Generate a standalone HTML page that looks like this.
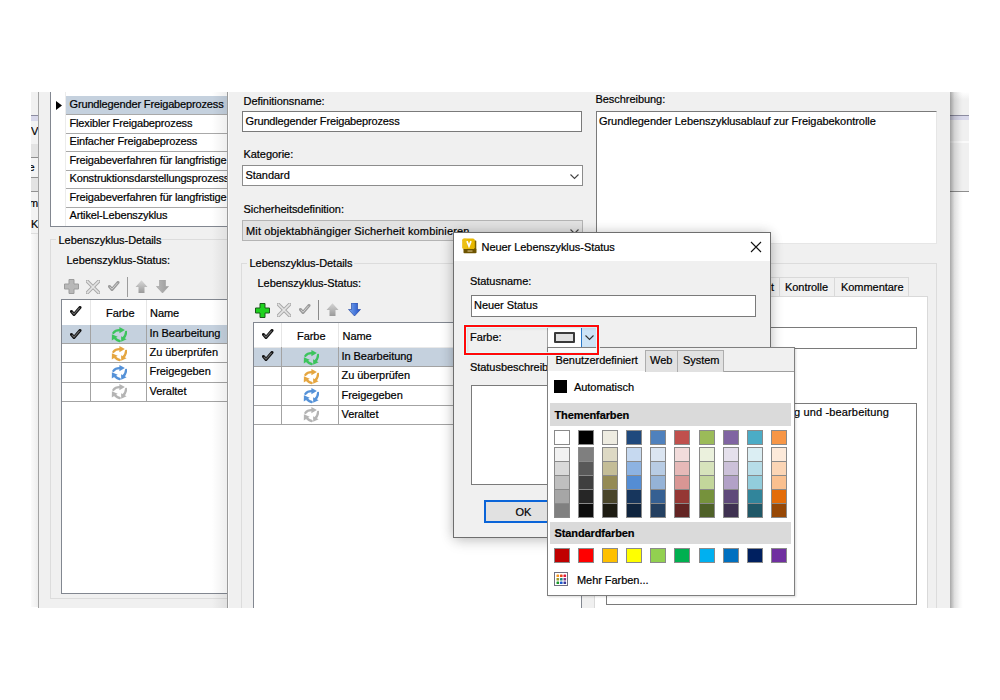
<!DOCTYPE html>
<html><head><meta charset="utf-8"><style>
html,body{margin:0;padding:0;}
body{width:1000px;height:700px;position:relative;overflow:hidden;background:#fff;}
.b{position:absolute;}
.t{position:absolute;font-family:"Liberation Sans",sans-serif;font-size:11px;line-height:13px;letter-spacing:-0.05px;white-space:nowrap;color:#000;-webkit-text-stroke:0.2px #000;}
</style></head><body>
<div class="b" style="left:31px;top:92px;width:7px;height:515px;background:linear-gradient(to right,#fbfbfb,#eeeeee);"></div>
<div class="b" style="left:31px;top:92px;width:7px;height:23px;background:#f1f1f1;"></div>
<div class="b" style="left:31px;top:115px;width:7px;height:1px;background:#8c8ca0;"></div>
<div class="b" style="left:31px;top:116px;width:7px;height:5px;background:#d8d8ea;"></div>
<div class="b" style="left:31px;top:121px;width:7px;height:23px;background:#f3f3f3;"></div>
<div class="b" style="left:31px;top:144px;width:7px;height:13px;background:#e3e3e3;"></div>
<div class="b" style="left:31px;top:157px;width:7px;height:1px;background:#8e8e8e;"></div>
<div class="b" style="left:31px;top:158px;width:7px;height:19px;background:#f3f3f3;"></div>
<div class="b" style="left:31px;top:177px;width:7px;height:1px;background:#929292;"></div>
<div class="b" style="left:31px;top:178px;width:7px;height:13px;background:#e3e3e3;"></div>
<div class="b" style="left:31px;top:191px;width:7px;height:1px;background:#929292;"></div>
<div class="b" style="left:31px;top:192px;width:7px;height:41px;background:#f3f3f3;"></div>
<div class="b" style="left:31px;top:233px;width:7px;height:1px;background:#dddddd;"></div>
<div class="b" style="left:31px;top:92px;width:7px;height:145px;overflow:hidden"><div class="t" style="left:0px;top:33px">V</div><div class="t" style="left:-2.5px;top:68.5px">e</div><div class="t" style="left:-2px;top:105px">m</div><div class="t" style="left:0px;top:126px">K</div></div>
<div class="b" style="left:38px;top:92px;width:190px;height:516px;background:#f0f0f0;"></div>
<div class="b" style="left:38px;top:92px;width:1px;height:516px;background:#a4a4a4;"></div>
<div class="b" style="left:50px;top:92px;width:178px;height:135px;background:#ffffff;"></div>
<div class="b" style="left:50px;top:92px;width:1px;height:135px;background:#828790;"></div>
<div class="b" style="left:50px;top:226px;width:178px;height:1px;background:#828790;"></div>
<div class="b" style="left:65px;top:92px;width:1px;height:134px;background:#ececec;"></div>
<div class="b" style="left:66px;top:96px;width:162px;height:18px;background:#c5d1de;"></div>
<div class="b" style="left:66px;top:114px;width:162px;height:1px;background:#a9a9a9;"></div>
<div class="b" style="left:66px;top:133px;width:162px;height:1px;background:#a9a9a9;"></div>
<div class="b" style="left:66px;top:151px;width:162px;height:1px;background:#a9a9a9;"></div>
<div class="b" style="left:66px;top:170px;width:162px;height:1px;background:#a9a9a9;"></div>
<div class="b" style="left:66px;top:188px;width:162px;height:1px;background:#a9a9a9;"></div>
<div class="b" style="left:66px;top:207px;width:162px;height:1px;background:#a9a9a9;"></div>
<svg class="b" style="left:55px;top:100px;" width="8" height="11" viewBox="0 0 8 11"><path d="M1 1 L7 5.5 L1 10 Z" fill="#000"/></svg>
<div class="t" style="left:69.5px;top:98.0px;letter-spacing:-0.15px">Grundlegender Freigabeprozess</div>
<div class="t" style="left:69.5px;top:116.5px;letter-spacing:-0.15px">Flexibler Freigabeprozess</div>
<div class="t" style="left:69.5px;top:135.0px;letter-spacing:-0.15px">Einfacher Freigabeprozess</div>
<div class="t" style="left:69.5px;top:153.5px;letter-spacing:-0.15px">Freigabeverfahren für langfristige Gültigkeit</div>
<div class="t" style="left:69.5px;top:172.0px;letter-spacing:-0.15px">Konstruktionsdarstellungsprozess</div>
<div class="t" style="left:69.5px;top:190.5px;letter-spacing:-0.15px">Freigabeverfahren für langfristige Gültigkeit</div>
<div class="t" style="left:69.5px;top:209.0px;letter-spacing:-0.15px">Artikel-Lebenszyklus</div>
<div class="b" style="left:50px;top:239px;width:178px;height:1px;background:#dcdcdc;"></div>
<div class="b" style="left:50px;top:239px;width:1px;height:360px;background:#dcdcdc;"></div>
<div class="b" style="left:50px;top:598px;width:178px;height:1px;background:#dcdcdc;"></div>
<div class="b" style="left:56px;top:234px;width:106px;height:12px;background:#f0f0f0;"></div>
<div class="t" style="left:58.5px;top:233.5px;">Lebenszyklus-Details</div>
<div class="t" style="left:66.5px;top:253.5px;">Lebenszyklus-Status:</div>
<svg class="b" style="left:63.5px;top:279px;" width="15" height="15" viewBox="0 0 15 15"><path d="M5 0.5 H10 V5 H14.5 V10 H10 V14.5 H5 V10 H0.5 V5 H5 Z" fill="#b8b8b8" stroke="#9c9c9c" stroke-width="1"/></svg>
<svg class="b" style="left:85.5px;top:279.5px;" width="14" height="14" viewBox="0 0 14 14"><path d="M1.5 1.5 L12.5 12.5 M12.5 1.5 L1.5 12.5" stroke="#a8a8a8" stroke-width="3.6" stroke-linecap="square"/><path d="M1.5 1.5 L12.5 12.5 M12.5 1.5 L1.5 12.5" stroke="#e4e4e4" stroke-width="1.6" stroke-linecap="square"/></svg>
<svg class="b" style="left:107.5px;top:280.5px;" width="12" height="11" viewBox="0 0 12 11"><path d="M1.5 5.5 L4 8.5 L10 1.5" fill="none" stroke="#9a9a9a" stroke-width="3" stroke-linejoin="round" stroke-linecap="round"/><path d="M1.8 5.8 L4 8.2 L9.6 1.9" fill="none" stroke="#d0d0d0" stroke-width="1" stroke-linejoin="round"/></svg>
<div class="b" style="left:127px;top:277px;width:1px;height:20px;background:#9c9c9c;"></div>
<svg class="b" style="left:134.5px;top:280px;" width="13" height="13" viewBox="0 0 13 13"><defs><linearGradient id="ug134_5" x1="0" y1="0" x2="0" y2="1"><stop offset="0" stop-color="#d8d8d8"/><stop offset="1" stop-color="#9a9a9a"/></linearGradient></defs><path d="M6.5 0.3 L12.5 7 L9.5 7 L9.5 13 L3.5 13 L3.5 7 L0.5 7 Z" fill="url(#ug134_5)"/></svg>
<svg class="b" style="left:155.5px;top:280px;" width="13" height="13" viewBox="0 0 13 13"><defs><linearGradient id="dg155_5" x1="0" y1="0" x2="1" y2="0"><stop offset="0" stop-color="#b8b8b8"/><stop offset="1" stop-color="#9c9c9c"/></linearGradient></defs><path d="M3.5 0 L9.5 0 L9.5 6.5 L12.5 6.5 L6.5 13 L0.5 6.5 L3.5 6.5 Z" fill="url(#dg155_5)" stroke="#a0a0a0" stroke-width="0.6"/></svg>
<div class="b" style="left:61px;top:299px;width:167px;height:295px;background:#ffffff;"></div>
<div class="b" style="left:61px;top:299px;width:167px;height:1px;background:#828790;"></div>
<div class="b" style="left:61px;top:299px;width:1px;height:295px;background:#828790;"></div>
<div class="b" style="left:61px;top:593px;width:167px;height:1px;background:#828790;"></div>
<div class="b" style="left:90px;top:300px;width:1px;height:25px;background:#e6e6e6;"></div>
<div class="b" style="left:146px;top:300px;width:1px;height:25px;background:#e6e6e6;"></div>
<svg class="b" style="left:69.5px;top:306px;" width="12" height="11" viewBox="0 0 12 11"><path d="M1.5 5.5 L4 8.5 L10 1.5" fill="none" stroke="#111" stroke-width="3" stroke-linejoin="round" stroke-linecap="round"/><path d="M1.8 5.8 L4 8.2 L9.6 1.9" fill="none" stroke="#6a6a6a" stroke-width="1.1" stroke-linejoin="round"/></svg>
<div class="t" style="left:106px;top:306.5px;">Farbe</div>
<div class="t" style="left:150px;top:306.5px;">Name</div>
<div class="b" style="left:62px;top:325px;width:166px;height:18px;background:#c5d1de;"></div>
<div class="b" style="left:62px;top:343px;width:166px;height:1px;background:#a3a3a3;"></div>
<div class="b" style="left:62px;top:362px;width:166px;height:1px;background:#a3a3a3;"></div>
<div class="b" style="left:62px;top:382px;width:166px;height:1px;background:#a3a3a3;"></div>
<div class="b" style="left:62px;top:401px;width:166px;height:1px;background:#a3a3a3;"></div>
<div class="b" style="left:90px;top:325px;width:1px;height:76px;background:#a3a3a3;"></div>
<div class="b" style="left:146px;top:325px;width:1px;height:76px;background:#a3a3a3;"></div>
<svg class="b" style="left:70px;top:329px;" width="12" height="11" viewBox="0 0 12 11"><path d="M1.5 5.5 L4 8.5 L10 1.5" fill="none" stroke="#111" stroke-width="3" stroke-linejoin="round" stroke-linecap="round"/><path d="M1.8 5.8 L4 8.2 L9.6 1.9" fill="none" stroke="#6a6a6a" stroke-width="1.1" stroke-linejoin="round"/></svg>
<svg class="b" style="left:111px;top:326.5px;" width="16" height="16" viewBox="0 0 16 16"><g fill="none" stroke="#3cc45c" stroke-width="2.4" stroke-linecap="round"><path d="M2.4 5.9 Q4.6 2.9 9 3.1"/><path d="M15.1 5 Q14.8 8.6 12.6 10.9"/><path d="M8.6 14 Q6.2 13.6 4.3 11.6"/></g><g fill="#3cc45c"><path d="M8.4 0 L13.9 3 L8.4 6.3 Z"/><path d="M10.1 9.3 L15.6 12.3 L10.2 14.7 Z"/><path d="M0.9 7.3 L0.8 13.6 L6.7 9.8 Z"/></g></svg>
<div class="t" style="left:149.5px;top:327.0px;">In Bearbeitung</div>
<svg class="b" style="left:111px;top:345.7px;" width="16" height="16" viewBox="0 0 16 16"><g fill="none" stroke="#e5a640" stroke-width="2.4" stroke-linecap="round"><path d="M2.4 5.9 Q4.6 2.9 9 3.1"/><path d="M15.1 5 Q14.8 8.6 12.6 10.9"/><path d="M8.6 14 Q6.2 13.6 4.3 11.6"/></g><g fill="#e5a640"><path d="M8.4 0 L13.9 3 L8.4 6.3 Z"/><path d="M10.1 9.3 L15.6 12.3 L10.2 14.7 Z"/><path d="M0.9 7.3 L0.8 13.6 L6.7 9.8 Z"/></g></svg>
<div class="t" style="left:149.5px;top:346.2px;">Zu überprüfen</div>
<svg class="b" style="left:111px;top:364.9px;" width="16" height="16" viewBox="0 0 16 16"><g fill="none" stroke="#5592d8" stroke-width="2.4" stroke-linecap="round"><path d="M2.4 5.9 Q4.6 2.9 9 3.1"/><path d="M15.1 5 Q14.8 8.6 12.6 10.9"/><path d="M8.6 14 Q6.2 13.6 4.3 11.6"/></g><g fill="#5592d8"><path d="M8.4 0 L13.9 3 L8.4 6.3 Z"/><path d="M10.1 9.3 L15.6 12.3 L10.2 14.7 Z"/><path d="M0.9 7.3 L0.8 13.6 L6.7 9.8 Z"/></g></svg>
<div class="t" style="left:149.5px;top:365.4px;">Freigegeben</div>
<svg class="b" style="left:111px;top:384.1px;" width="16" height="16" viewBox="0 0 16 16"><g fill="none" stroke="#b4b4b4" stroke-width="2.4" stroke-linecap="round"><path d="M2.4 5.9 Q4.6 2.9 9 3.1"/><path d="M15.1 5 Q14.8 8.6 12.6 10.9"/><path d="M8.6 14 Q6.2 13.6 4.3 11.6"/></g><g fill="#b4b4b4"><path d="M8.4 0 L13.9 3 L8.4 6.3 Z"/><path d="M10.1 9.3 L15.6 12.3 L10.2 14.7 Z"/><path d="M0.9 7.3 L0.8 13.6 L6.7 9.8 Z"/></g></svg>
<div class="t" style="left:149.5px;top:384.6px;">Veraltet</div>
<div class="b" style="left:212px;top:92px;width:16px;height:516px;background:linear-gradient(to right,rgba(0,0,0,0),rgba(0,0,0,0.07));"></div>
<div class="b" style="left:950px;top:92px;width:19px;height:100px;background:#f0f0f0;"></div>
<div class="b" style="left:950px;top:92px;width:19px;height:8px;background:linear-gradient(to bottom,#ffffff,#f0f0f0);"></div>
<div class="b" style="left:950px;top:115px;width:19px;height:1px;background:#8c8ca0;"></div>
<div class="b" style="left:950px;top:116px;width:19px;height:4px;background:#d8d8ea;"></div>
<div class="b" style="left:950px;top:141px;width:19px;height:2px;background:#fafafa;"></div>
<div class="b" style="left:950px;top:191px;width:19px;height:1px;background:#8e8e8e;"></div>
<div class="b" style="left:228px;top:92px;width:722px;height:516px;background:#f0f0f0;"></div>
<div class="b" style="left:227px;top:92px;width:1px;height:516px;background:#9a9a9a;"></div>
<div class="b" style="left:228px;top:92px;width:1px;height:516px;background:#fafafa;"></div>
<div class="t" style="left:243.5px;top:95px;">Definitionsname:</div>
<div class="b" style="left:242px;top:111px;width:340px;height:21px;background:#fff;border:1px solid #7a7a7a;box-sizing:border-box"></div>
<div class="t" style="left:245.5px;top:115px;letter-spacing:-0.15px">Grundlegender Freigabeprozess</div>
<div class="t" style="left:243.5px;top:148px;">Kategorie:</div>
<div class="b" style="left:242px;top:165px;width:341px;height:21px;background:#fff;border:1px solid #8c8c8c;box-sizing:border-box"></div>
<div class="t" style="left:245.5px;top:169px;">Standard</div>
<svg class="b" style="left:569.5px;top:173.5px;" width="9" height="6" viewBox="0 0 9 6"><path d="M0.5 0.5 L4.5 4.5 L8.5 0.5" fill="none" stroke="#444" stroke-width="1.1"/></svg>
<div class="t" style="left:243.5px;top:203px;">Sicherheitsdefinition:</div>
<div class="b" style="left:242px;top:220px;width:341px;height:21px;background:#e2e2e2;border:1px solid #b4b4b4;box-sizing:border-box"></div>
<div class="t" style="left:246px;top:224.5px;letter-spacing:0.15px">Mit objektabhängiger Sicherheit kombinieren</div>
<svg class="b" style="left:569.5px;top:228.5px;" width="9" height="6" viewBox="0 0 9 6"><path d="M0.5 0.5 L4.5 4.5 L8.5 0.5" fill="none" stroke="#444" stroke-width="1.1"/></svg>
<div class="t" style="left:595.5px;top:93px;">Beschreibung:</div>
<div class="b" style="left:596px;top:111px;width:341px;height:133px;background:#fff;border-style:solid;border-width:1px;border-color:#7a7a7a #e6e6e6 #e6e6e6 #7a7a7a;box-sizing:border-box"></div>
<div class="t" style="left:599px;top:115px;">Grundlegender Lebenszyklusablauf zur Freigabekontrolle</div>
<div class="b" style="left:241px;top:263px;width:348px;height:1px;background:#dcdcdc;"></div>
<div class="b" style="left:241px;top:263px;width:1px;height:345px;background:#dcdcdc;"></div>
<div class="b" style="left:247px;top:258px;width:107px;height:12px;background:#f0f0f0;"></div>
<div class="t" style="left:249.5px;top:257px;">Lebenszyklus-Details</div>
<div class="t" style="left:257.5px;top:277px;">Lebenszyklus-Status:</div>
<svg class="b" style="left:255px;top:302.5px;" width="15" height="15" viewBox="0 0 15 15"><path d="M5 0.5 H10 V5 H14.5 V10 H10 V14.5 H5 V10 H0.5 V5 H5 Z" fill="#1ed21e" stroke="#1a5a1a" stroke-width="1"/></svg>
<svg class="b" style="left:277px;top:302.5px;" width="14" height="14" viewBox="0 0 14 14"><path d="M1.5 1.5 L12.5 12.5 M12.5 1.5 L1.5 12.5" stroke="#a8a8a8" stroke-width="3.6" stroke-linecap="square"/><path d="M1.5 1.5 L12.5 12.5 M12.5 1.5 L1.5 12.5" stroke="#e4e4e4" stroke-width="1.6" stroke-linecap="square"/></svg>
<svg class="b" style="left:299px;top:303.5px;" width="12" height="11" viewBox="0 0 12 11"><path d="M1.5 5.5 L4 8.5 L10 1.5" fill="none" stroke="#9a9a9a" stroke-width="3" stroke-linejoin="round" stroke-linecap="round"/><path d="M1.8 5.8 L4 8.2 L9.6 1.9" fill="none" stroke="#d0d0d0" stroke-width="1" stroke-linejoin="round"/></svg>
<div class="b" style="left:318px;top:300px;width:1px;height:20px;background:#8a8a8a;"></div>
<svg class="b" style="left:326px;top:303px;" width="13" height="13" viewBox="0 0 13 13"><defs><linearGradient id="ug326" x1="0" y1="0" x2="0" y2="1"><stop offset="0" stop-color="#d4d4d4"/><stop offset="1" stop-color="#9a9a9a"/></linearGradient></defs><path d="M6.5 0.3 L12.5 7 L9.5 7 L9.5 13 L3.5 13 L3.5 7 L0.5 7 Z" fill="url(#ug326)"/></svg>
<svg class="b" style="left:347.5px;top:303px;" width="13" height="13" viewBox="0 0 13 13"><defs><linearGradient id="dg347_5" x1="0" y1="0" x2="1" y2="0"><stop offset="0" stop-color="#7aaaf0"/><stop offset="1" stop-color="#1f4fc8"/></linearGradient></defs><path d="M3.5 0 L9.5 0 L9.5 6.5 L12.5 6.5 L6.5 13 L0.5 6.5 L3.5 6.5 Z" fill="url(#dg347_5)" stroke="#1a3a9a" stroke-width="0.6"/></svg>
<div class="b" style="left:253px;top:322px;width:329px;height:286px;background:#fff;"></div>
<div class="b" style="left:253px;top:322px;width:329px;height:1px;background:#828790;"></div>
<div class="b" style="left:253px;top:322px;width:1px;height:286px;background:#828790;"></div>
<div class="b" style="left:581px;top:322px;width:1px;height:286px;background:#828790;"></div>
<div class="b" style="left:281px;top:323px;width:1px;height:24px;background:#e6e6e6;"></div>
<div class="b" style="left:338px;top:323px;width:1px;height:24px;background:#e6e6e6;"></div>
<svg class="b" style="left:261.5px;top:328.5px;" width="12" height="11" viewBox="0 0 12 11"><path d="M1.5 5.5 L4 8.5 L10 1.5" fill="none" stroke="#111" stroke-width="3" stroke-linejoin="round" stroke-linecap="round"/><path d="M1.8 5.8 L4 8.2 L9.6 1.9" fill="none" stroke="#6a6a6a" stroke-width="1.1" stroke-linejoin="round"/></svg>
<div class="t" style="left:297px;top:330px;">Farbe</div>
<div class="t" style="left:342.5px;top:330px;">Name</div>
<div class="b" style="left:254px;top:348px;width:327px;height:18px;background:#c5d1de;"></div>
<div class="b" style="left:254px;top:347px;width:327px;height:1px;background:#e9e9e9;"></div>
<div class="b" style="left:254px;top:366px;width:327px;height:1px;background:#a3a3a3;"></div>
<div class="b" style="left:254px;top:385px;width:327px;height:1px;background:#a3a3a3;"></div>
<div class="b" style="left:254px;top:405px;width:327px;height:1px;background:#a3a3a3;"></div>
<div class="b" style="left:254px;top:424px;width:327px;height:1px;background:#a3a3a3;"></div>
<div class="b" style="left:281px;top:347px;width:1px;height:77px;background:#a3a3a3;"></div>
<div class="b" style="left:338px;top:347px;width:1px;height:77px;background:#a3a3a3;"></div>
<svg class="b" style="left:262px;top:350.5px;" width="12" height="11" viewBox="0 0 12 11"><path d="M1.5 5.5 L4 8.5 L10 1.5" fill="none" stroke="#111" stroke-width="3" stroke-linejoin="round" stroke-linecap="round"/><path d="M1.8 5.8 L4 8.2 L9.6 1.9" fill="none" stroke="#6a6a6a" stroke-width="1.1" stroke-linejoin="round"/></svg>
<svg class="b" style="left:303px;top:349.5px;" width="16" height="16" viewBox="0 0 16 16"><g fill="none" stroke="#3cc45c" stroke-width="2.4" stroke-linecap="round"><path d="M2.4 5.9 Q4.6 2.9 9 3.1"/><path d="M15.1 5 Q14.8 8.6 12.6 10.9"/><path d="M8.6 14 Q6.2 13.6 4.3 11.6"/></g><g fill="#3cc45c"><path d="M8.4 0 L13.9 3 L8.4 6.3 Z"/><path d="M10.1 9.3 L15.6 12.3 L10.2 14.7 Z"/><path d="M0.9 7.3 L0.8 13.6 L6.7 9.8 Z"/></g></svg>
<div class="t" style="left:341.5px;top:350.0px;">In Bearbeitung</div>
<svg class="b" style="left:303px;top:368.7px;" width="16" height="16" viewBox="0 0 16 16"><g fill="none" stroke="#e5a640" stroke-width="2.4" stroke-linecap="round"><path d="M2.4 5.9 Q4.6 2.9 9 3.1"/><path d="M15.1 5 Q14.8 8.6 12.6 10.9"/><path d="M8.6 14 Q6.2 13.6 4.3 11.6"/></g><g fill="#e5a640"><path d="M8.4 0 L13.9 3 L8.4 6.3 Z"/><path d="M10.1 9.3 L15.6 12.3 L10.2 14.7 Z"/><path d="M0.9 7.3 L0.8 13.6 L6.7 9.8 Z"/></g></svg>
<div class="t" style="left:341.5px;top:369.3px;">Zu überprüfen</div>
<svg class="b" style="left:303px;top:387.9px;" width="16" height="16" viewBox="0 0 16 16"><g fill="none" stroke="#5592d8" stroke-width="2.4" stroke-linecap="round"><path d="M2.4 5.9 Q4.6 2.9 9 3.1"/><path d="M15.1 5 Q14.8 8.6 12.6 10.9"/><path d="M8.6 14 Q6.2 13.6 4.3 11.6"/></g><g fill="#5592d8"><path d="M8.4 0 L13.9 3 L8.4 6.3 Z"/><path d="M10.1 9.3 L15.6 12.3 L10.2 14.7 Z"/><path d="M0.9 7.3 L0.8 13.6 L6.7 9.8 Z"/></g></svg>
<div class="t" style="left:341.5px;top:388.6px;">Freigegeben</div>
<svg class="b" style="left:303px;top:407.1px;" width="16" height="16" viewBox="0 0 16 16"><g fill="none" stroke="#b4b4b4" stroke-width="2.4" stroke-linecap="round"><path d="M2.4 5.9 Q4.6 2.9 9 3.1"/><path d="M15.1 5 Q14.8 8.6 12.6 10.9"/><path d="M8.6 14 Q6.2 13.6 4.3 11.6"/></g><g fill="#b4b4b4"><path d="M8.4 0 L13.9 3 L8.4 6.3 Z"/><path d="M10.1 9.3 L15.6 12.3 L10.2 14.7 Z"/><path d="M0.9 7.3 L0.8 13.6 L6.7 9.8 Z"/></g></svg>
<div class="t" style="left:341.5px;top:407.9px;">Veraltet</div>
<div class="b" style="left:594px;top:263px;width:343px;height:1px;background:#dcdcdc;"></div>
<div class="b" style="left:936px;top:263px;width:1px;height:345px;background:#dcdcdc;"></div>
<div class="b" style="left:594px;top:277px;width:186px;height:20px;background:#f0f0f0;border:1px solid #d9d9d9;box-sizing:border-box"></div>
<div class="b" style="left:779px;top:277px;width:56px;height:20px;background:#f0f0f0;border:1px solid #d9d9d9;box-sizing:border-box"></div>
<div class="b" style="left:834px;top:277px;width:75px;height:20px;background:#f0f0f0;border:1px solid #d9d9d9;box-sizing:border-box"></div>
<div class="b" style="left:595px;top:279px;width:183px;height:17px;overflow:hidden"><div class="t" style="right:4px;top:2px">Sicherheit</div></div>
<div class="t" style="left:785px;top:281px;">Kontrolle</div>
<div class="t" style="left:841px;top:281px;">Kommentare</div>
<div class="b" style="left:594px;top:296px;width:334px;height:312px;background:#fff;border:1px solid #d9d9d9;border-bottom:none;box-sizing:border-box"></div>
<div class="b" style="left:600px;top:327px;width:317px;height:22px;background:#fff;border:1px solid #7a7a7a;box-sizing:border-box"></div>
<div class="b" style="left:606px;top:403px;width:311px;height:202px;background:#fff;border:1px solid #7a7a7a;box-sizing:border-box"></div>
<div class="t" style="right:111px;top:406px;letter-spacing:0.15px">Lebenszyklus für Konstruktionsdatenerstellung und -bearbeitung</div>
<div class="b" style="left:950px;top:92px;width:13px;height:516px;background:linear-gradient(to right,rgba(0,0,0,0.34),rgba(0,0,0,0.12) 35%,rgba(0,0,0,0.03) 75%,rgba(0,0,0,0));"></div>
<div class="b" style="left:454px;top:233px;width:316px;height:304px;box-shadow:0 0 12px rgba(0,0,0,0.2),0 4px 14px rgba(0,0,0,0.14)"></div>
<div class="b" style="left:453px;top:232px;width:318px;height:306px;background:#f0f0f0;border:1px solid #6e6e6e;box-sizing:border-box"></div>
<div class="b" style="left:454px;top:233px;width:316px;height:28px;background:#ffffff;"></div>
<svg class="b" style="left:462px;top:238px;" width="15" height="16" viewBox="0 0 15 16"><rect x="12" y="2.5" width="2.3" height="12.5" rx="0.6" fill="#7a6200"/><rect x="1.5" y="10.5" width="12.8" height="4.8" rx="0.8" fill="#6e5400"/><rect x="0.3" y="0.5" width="12.5" height="10.6" rx="1.8" fill="#e8b800"/><rect x="0.3" y="0.5" width="5" height="10.6" rx="1.5" fill="#f0c420" opacity="0.6"/><path d="M5 3.1 L7 8.2 L9 3.1" fill="none" stroke="#fff" stroke-width="1.7"/><rect x="5.5" y="12.4" width="5" height="1.3" fill="#c8b070"/></svg>
<div class="t" style="left:481.5px;top:240.5px;">Neuer Lebenszyklus-Status</div>
<svg class="b" style="left:750px;top:240.5px;" width="12" height="12" viewBox="0 0 12 12"><path d="M1 1 L11 11 M11 1 L1 11" stroke="#111" stroke-width="1.1"/></svg>
<div class="t" style="left:470px;top:275px;">Statusname:</div>
<div class="b" style="left:471px;top:295px;width:285px;height:22px;background:#fff;border:1px solid #7a7a7a;box-sizing:border-box"></div>
<div class="t" style="left:474px;top:299px;">Neuer Status</div>
<div class="t" style="left:470px;top:331px;">Farbe:</div>
<div class="b" style="left:547px;top:327px;width:51px;height:21px;background:#fff;border:1px solid #a0a0a0;border-bottom-color:#8a8a8a;box-sizing:border-box"></div>
<div class="b" style="left:554px;top:332px;width:21px;height:11px;background:#e0e0e0;border:2px solid #3a3a3a;box-sizing:border-box;border-radius:1px"></div>
<div class="b" style="left:581px;top:328px;width:16px;height:19px;background:#cde4f7;border-left:1px solid #2a78c8;box-sizing:border-box"></div>
<svg class="b" style="left:585px;top:335px;" width="9" height="6" viewBox="0 0 9 6"><path d="M0.5 0.5 L4.5 4.5 L8.5 0.5" fill="none" stroke="#333" stroke-width="1.1"/></svg>
<div class="t" style="left:470px;top:361px;">Statusbeschreibung:</div>
<div class="b" style="left:471px;top:385px;width:289px;height:100px;background:#fff;border:1px solid #7a7a7a;box-sizing:border-box"></div>
<div class="b" style="left:484px;top:500px;width:76px;height:23px;background:#e1e1e1;border:2px solid #0a64d8;box-sizing:border-box"></div>
<div class="t" style="left:515.5px;top:506px;">OK</div>
<div class="b" style="left:547px;top:347px;width:248px;height:249px;background:#fff;border:1px solid #7f7f7f;box-sizing:border-box;box-shadow:1px 1px 2px rgba(0,0,0,0.15)"></div>
<div class="b" style="left:548px;top:348px;width:246px;height:23px;background:#f0f0f0;"></div>
<div class="b" style="left:548px;top:348px;width:49px;height:4px;background:#fafafa;"></div>
<div class="b" style="left:645px;top:371px;width:149px;height:1px;background:#a0a0a0;"></div>
<div class="b" style="left:645px;top:350px;width:33px;height:22px;background:#e1e1e1;border:1px solid #adadad;border-bottom:none;box-sizing:border-box"></div>
<div class="b" style="left:677px;top:350px;width:47px;height:22px;background:#e1e1e1;border:1px solid #adadad;border-bottom:none;box-sizing:border-box"></div>
<div class="t" style="left:555.5px;top:354px;">Benutzerdefiniert</div>
<div class="t" style="left:650px;top:354px;">Web</div>
<div class="t" style="left:683px;top:354px;">System</div>
<div class="b" style="left:554px;top:380px;width:13px;height:13px;background:#000;"></div>
<div class="t" style="left:574px;top:380.5px;">Automatisch</div>
<div class="b" style="left:550px;top:403px;width:241px;height:23px;background:#dadada;"></div>
<div class="t" style="left:554.5px;top:409px;font-weight:bold;letter-spacing:-0.1px">Themenfarben</div>
<div class="b" style="left:554px;top:430px;width:16px;height:15px;background:#FFFFFF;border:1px solid #8a8a8a;box-sizing:border-box"></div>
<div class="b" style="left:554px;top:447px;width:16px;height:71px;background:#8a8a8a;"></div>
<div class="b" style="left:555px;top:448px;width:14px;height:13px;background:#F2F2F2;"></div>
<div class="b" style="left:555px;top:462px;width:14px;height:13px;background:#D9D9D9;"></div>
<div class="b" style="left:555px;top:476px;width:14px;height:13px;background:#BFBFBF;"></div>
<div class="b" style="left:555px;top:490px;width:14px;height:13px;background:#A6A6A6;"></div>
<div class="b" style="left:555px;top:504px;width:14px;height:13px;background:#808080;"></div>
<div class="b" style="left:578px;top:430px;width:16px;height:15px;background:#000000;border:1px solid #8a8a8a;box-sizing:border-box"></div>
<div class="b" style="left:578px;top:447px;width:16px;height:71px;background:#8a8a8a;"></div>
<div class="b" style="left:579px;top:448px;width:14px;height:13px;background:#7F7F7F;"></div>
<div class="b" style="left:579px;top:462px;width:14px;height:13px;background:#595959;"></div>
<div class="b" style="left:579px;top:476px;width:14px;height:13px;background:#3F3F3F;"></div>
<div class="b" style="left:579px;top:490px;width:14px;height:13px;background:#262626;"></div>
<div class="b" style="left:579px;top:504px;width:14px;height:13px;background:#0D0D0D;"></div>
<div class="b" style="left:602px;top:430px;width:16px;height:15px;background:#EEECE1;border:1px solid #8a8a8a;box-sizing:border-box"></div>
<div class="b" style="left:602px;top:447px;width:16px;height:71px;background:#8a8a8a;"></div>
<div class="b" style="left:603px;top:448px;width:14px;height:13px;background:#DDD9C4;"></div>
<div class="b" style="left:603px;top:462px;width:14px;height:13px;background:#C4BD97;"></div>
<div class="b" style="left:603px;top:476px;width:14px;height:13px;background:#948A54;"></div>
<div class="b" style="left:603px;top:490px;width:14px;height:13px;background:#4A452A;"></div>
<div class="b" style="left:603px;top:504px;width:14px;height:13px;background:#1D1B11;"></div>
<div class="b" style="left:626px;top:430px;width:16px;height:15px;background:#1F497D;border:1px solid #8a8a8a;box-sizing:border-box"></div>
<div class="b" style="left:626px;top:447px;width:16px;height:71px;background:#8a8a8a;"></div>
<div class="b" style="left:627px;top:448px;width:14px;height:13px;background:#C6D9F0;"></div>
<div class="b" style="left:627px;top:462px;width:14px;height:13px;background:#8DB3E2;"></div>
<div class="b" style="left:627px;top:476px;width:14px;height:13px;background:#548DD4;"></div>
<div class="b" style="left:627px;top:490px;width:14px;height:13px;background:#17365D;"></div>
<div class="b" style="left:627px;top:504px;width:14px;height:13px;background:#0F243E;"></div>
<div class="b" style="left:650px;top:430px;width:16px;height:15px;background:#4F81BD;border:1px solid #8a8a8a;box-sizing:border-box"></div>
<div class="b" style="left:650px;top:447px;width:16px;height:71px;background:#8a8a8a;"></div>
<div class="b" style="left:651px;top:448px;width:14px;height:13px;background:#DBE5F1;"></div>
<div class="b" style="left:651px;top:462px;width:14px;height:13px;background:#B8CCE4;"></div>
<div class="b" style="left:651px;top:476px;width:14px;height:13px;background:#95B3D7;"></div>
<div class="b" style="left:651px;top:490px;width:14px;height:13px;background:#366092;"></div>
<div class="b" style="left:651px;top:504px;width:14px;height:13px;background:#244061;"></div>
<div class="b" style="left:674px;top:430px;width:16px;height:15px;background:#C0504D;border:1px solid #8a8a8a;box-sizing:border-box"></div>
<div class="b" style="left:674px;top:447px;width:16px;height:71px;background:#8a8a8a;"></div>
<div class="b" style="left:675px;top:448px;width:14px;height:13px;background:#F2DCDB;"></div>
<div class="b" style="left:675px;top:462px;width:14px;height:13px;background:#E6B9B8;"></div>
<div class="b" style="left:675px;top:476px;width:14px;height:13px;background:#D99694;"></div>
<div class="b" style="left:675px;top:490px;width:14px;height:13px;background:#953734;"></div>
<div class="b" style="left:675px;top:504px;width:14px;height:13px;background:#632423;"></div>
<div class="b" style="left:699px;top:430px;width:16px;height:15px;background:#9BBB59;border:1px solid #8a8a8a;box-sizing:border-box"></div>
<div class="b" style="left:699px;top:447px;width:16px;height:71px;background:#8a8a8a;"></div>
<div class="b" style="left:700px;top:448px;width:14px;height:13px;background:#EBF1DD;"></div>
<div class="b" style="left:700px;top:462px;width:14px;height:13px;background:#D7E3BC;"></div>
<div class="b" style="left:700px;top:476px;width:14px;height:13px;background:#C3D69B;"></div>
<div class="b" style="left:700px;top:490px;width:14px;height:13px;background:#76923C;"></div>
<div class="b" style="left:700px;top:504px;width:14px;height:13px;background:#4F6128;"></div>
<div class="b" style="left:723px;top:430px;width:16px;height:15px;background:#8064A2;border:1px solid #8a8a8a;box-sizing:border-box"></div>
<div class="b" style="left:723px;top:447px;width:16px;height:71px;background:#8a8a8a;"></div>
<div class="b" style="left:724px;top:448px;width:14px;height:13px;background:#E5E0EC;"></div>
<div class="b" style="left:724px;top:462px;width:14px;height:13px;background:#CCC1D9;"></div>
<div class="b" style="left:724px;top:476px;width:14px;height:13px;background:#B2A1C7;"></div>
<div class="b" style="left:724px;top:490px;width:14px;height:13px;background:#5F497A;"></div>
<div class="b" style="left:724px;top:504px;width:14px;height:13px;background:#3F3151;"></div>
<div class="b" style="left:747px;top:430px;width:16px;height:15px;background:#4BACC6;border:1px solid #8a8a8a;box-sizing:border-box"></div>
<div class="b" style="left:747px;top:447px;width:16px;height:71px;background:#8a8a8a;"></div>
<div class="b" style="left:748px;top:448px;width:14px;height:13px;background:#DBEEF3;"></div>
<div class="b" style="left:748px;top:462px;width:14px;height:13px;background:#B7DDE8;"></div>
<div class="b" style="left:748px;top:476px;width:14px;height:13px;background:#92CDDC;"></div>
<div class="b" style="left:748px;top:490px;width:14px;height:13px;background:#31859B;"></div>
<div class="b" style="left:748px;top:504px;width:14px;height:13px;background:#205867;"></div>
<div class="b" style="left:771px;top:430px;width:16px;height:15px;background:#F79646;border:1px solid #8a8a8a;box-sizing:border-box"></div>
<div class="b" style="left:771px;top:447px;width:16px;height:71px;background:#8a8a8a;"></div>
<div class="b" style="left:772px;top:448px;width:14px;height:13px;background:#FDEADA;"></div>
<div class="b" style="left:772px;top:462px;width:14px;height:13px;background:#FBD5B5;"></div>
<div class="b" style="left:772px;top:476px;width:14px;height:13px;background:#FAC08F;"></div>
<div class="b" style="left:772px;top:490px;width:14px;height:13px;background:#E36C09;"></div>
<div class="b" style="left:772px;top:504px;width:14px;height:13px;background:#974806;"></div>
<div class="b" style="left:550px;top:522px;width:241px;height:22px;background:#dadada;"></div>
<div class="t" style="left:554.5px;top:527px;font-weight:bold;letter-spacing:-0.1px">Standardfarben</div>
<div class="b" style="left:554px;top:548px;width:16px;height:15px;background:#C00000;border:1px solid #8a8a8a;box-sizing:border-box"></div>
<div class="b" style="left:578px;top:548px;width:16px;height:15px;background:#FF0000;border:1px solid #8a8a8a;box-sizing:border-box"></div>
<div class="b" style="left:602px;top:548px;width:16px;height:15px;background:#FFC000;border:1px solid #8a8a8a;box-sizing:border-box"></div>
<div class="b" style="left:626px;top:548px;width:16px;height:15px;background:#FFFF00;border:1px solid #8a8a8a;box-sizing:border-box"></div>
<div class="b" style="left:650px;top:548px;width:16px;height:15px;background:#92D050;border:1px solid #8a8a8a;box-sizing:border-box"></div>
<div class="b" style="left:674px;top:548px;width:16px;height:15px;background:#00B050;border:1px solid #8a8a8a;box-sizing:border-box"></div>
<div class="b" style="left:699px;top:548px;width:16px;height:15px;background:#00B0F0;border:1px solid #8a8a8a;box-sizing:border-box"></div>
<div class="b" style="left:723px;top:548px;width:16px;height:15px;background:#0070C0;border:1px solid #8a8a8a;box-sizing:border-box"></div>
<div class="b" style="left:747px;top:548px;width:16px;height:15px;background:#002060;border:1px solid #8a8a8a;box-sizing:border-box"></div>
<div class="b" style="left:771px;top:548px;width:16px;height:15px;background:#7030A0;border:1px solid #8a8a8a;box-sizing:border-box"></div>
<svg class="b" style="left:554px;top:572px;" width="14" height="14" viewBox="0 0 14 14"><rect x="0.5" y="0.5" width="13" height="13" fill="#fff" stroke="#6f6f80"/><rect x="2.5" y="2.5" width="2.6" height="2.6" rx="0.6" fill="#f7941d"/><rect x="6.0" y="2.5" width="2.6" height="2.6" rx="0.6" fill="#e84a1d"/><rect x="9.5" y="2.5" width="2.6" height="2.6" rx="0.6" fill="#e0163a"/><rect x="2.5" y="6.0" width="2.6" height="2.6" rx="0.6" fill="#9a9a2a"/><rect x="6.0" y="6.0" width="2.6" height="2.6" rx="0.6" fill="#1a8a7a"/><rect x="9.5" y="6.0" width="2.6" height="2.6" rx="0.6" fill="#7a3a8a"/><rect x="2.5" y="9.5" width="2.6" height="2.6" rx="0.6" fill="#1a9a2a"/><rect x="6.0" y="9.5" width="2.6" height="2.6" rx="0.6" fill="#1a5ad0"/><rect x="9.5" y="9.5" width="2.6" height="2.6" rx="0.6" fill="#3a3a9a"/></svg>
<div class="t" style="left:577px;top:574px;">Mehr Farben...</div>
<div class="b" style="left:464px;top:324.5px;width:135px;height:30.0px;border:2px solid #ff0a0a;box-sizing:border-box;box-shadow:0 0 0 1px rgba(225,255,255,0.85),inset 0 0 0 1px rgba(225,255,255,0.85),inset 2px 2px 3px rgba(0,0,0,0.08)"></div>
</body></html>
